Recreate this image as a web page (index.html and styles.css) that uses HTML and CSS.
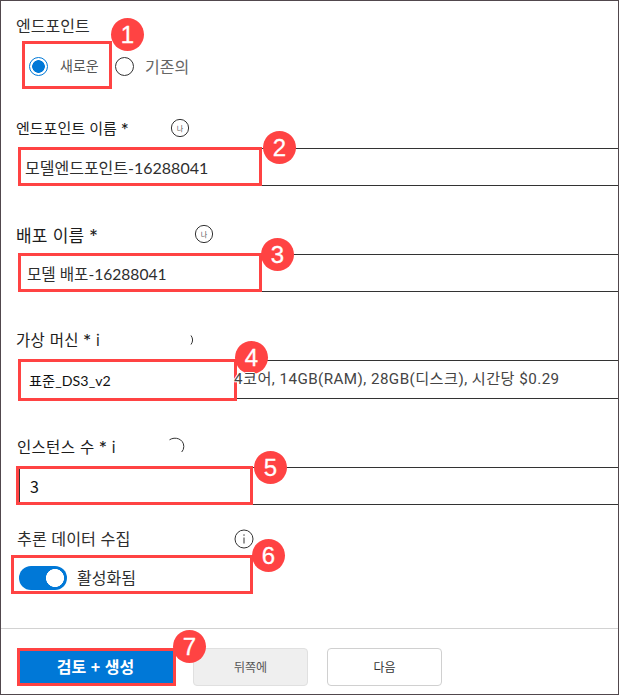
FILE: index.html
```html
<!DOCTYPE html>
<html lang="ko">
<head>
<meta charset="utf-8">
<title>엔드포인트</title>
<link rel="stylesheet" href="styles.css">
</head>
<body>
<main class="panel">
  <section class="group endpoint">
    <h2 class="label t-endpoint">엔드포인트</h2>
    <div class="radios">
      <label class="radio marked"><span class="dot on"></span><span class="t-new">새로운</span><span class="frame f1"></span><b class="badge b1">1</b></label>
      <label class="radio other"><span class="dot"></span><span class="t-old">기존의</span></label>
    </div>
  </section>

  <section class="group">
    <div class="label"><span class="t-name">엔드포인트 이름 *</span>
      <svg class="icon i1" viewBox="0 0 20 20"><circle cx="10" cy="10" r="8.6"/><text x="10" y="12.5">나</text></svg></div>
    <div class="field"><span class="t-v1">모델엔드포인트<span class="digits">-16288041</span></span><span class="frame f2"></span><b class="badge b2">2</b></div>
  </section>

  <section class="group">
    <div class="label"><span class="t-deploy">배포 이름 *</span>
      <svg class="icon i2" viewBox="0 0 20 20"><circle cx="10" cy="10" r="8.6"/><text x="10" y="12.5">나</text></svg></div>
    <div class="field"><span class="t-v2">모델 배포-16288041</span><span class="frame f3"></span><b class="badge b3">3</b></div>
  </section>

  <section class="group">
    <div class="label"><span class="t-vm">가상 머신 * i</span>
      <svg class="icon i3" viewBox="0 0 20 20"><path d="M16 5.5Q19.2 10 16 14.5"/></svg></div>
    <div class="field tall"><span class="t-v3">표준_DS3_v2</span><span class="frame f4"></span><b class="badge b4">4</b><span class="t-spec">4코어, 14GB(RAM), 28GB(디스크), 시간당 $0.29</span></div>
  </section>

  <section class="group">
    <div class="label"><span class="t-count">인스턴스 수 * i</span>
      <svg class="icon i4" viewBox="0 0 20 20"><path d="M3.5 2.8C9-.8 17.8 1.800 17.800 9.500Q17.800 12.800 15.700 15"/></svg></div>
    <div class="field count"><span class="t-v4">3</span><span class="frame f5"></span><b class="badge b5">5</b></div>
  </section>

  <section class="group collect">
    <div class="label"><span class="t-collect">추론 데이터 수집</span>
      <svg class="icon i5" viewBox="0 0 20 20"><circle cx="10" cy="10" r="9"/><path d="M10 8.500v6M10 5.300v1.500"/></svg></div>
    <div class="switch-row"><span class="switch"></span><span class="t-on">활성화됨</span><span class="frame f6"></span><b class="badge b6">6</b></div>
  </section>

  <footer class="actions">
    <button class="btn primary"><span>검토 + 생성</span><b class="badge b7">7</b></button>
    <button class="btn muted">뒤쪽에</button>
    <button class="btn">다음</button>
  </footer>
</main>
</body>
</html>
```
FILE: styles.css
```css
* { box-sizing: border-box; }
body { margin: 0; background: #fff; }
.panel {
  width: 619px;
  height: 695px;
  border: 1px solid #51484d;
  overflow: hidden;
  display: grid;
  grid-template-rows: 110px 106px 106px 107px 92px 106px 66px;
  color: #2e2e2e;
  font: 400 16px/20px Lato, "Noto Sans CJK KR", sans-serif;
  white-space: nowrap;
}
.label { display: flex; align-items: center; height: 20px; margin: 0; padding-left: 15px; font-family: Inter, "Noto Sans CJK KR", sans-serif; font-size: 16px; font-weight: 400; }
.group { display: flex; flex-direction: column; padding-top: 7px; }

.endpoint { padding-top: 15px; }
.radios { display: flex; align-items: center; height: 48px; margin-top: 5px; padding-left: 21px; }
.radio { position: relative; display: flex; align-items: center; width: 90px; height: 48px; padding-left: 7px; gap: 12px; }
.radio.other { width: auto; padding-left: 3px; gap: 11px; margin-top: 2px; }
.radio.marked { padding-top: 2px; }
.dot { width: 19px; height: 19px; border: 1px solid #333; border-radius: 50%; }
.dot.on { border-color: #0078d7; background: radial-gradient(circle, #0078d7 6px, #fff 6.6px); }
.t-new { font-size: 14px; color: #555; }
.t-old { padding-top: 2px; color: #666; }

.field { position: relative; display: flex; align-items: center; height: 38px; margin: 10px 0 0 17px; border: solid #333; border-width: 1px 0; padding-left: 7px; }
.tall { height: 39px; }
.count { margin-left: 18px; border-left: 1px solid #333; padding-left: 6px; }

.frame { position: absolute; border: 3px solid #ff4343; pointer-events: none; }
.f1 { inset: 0; }
.f2, .f3 { left: 0; top: -2px; width: 244px; height: 39px; }
.f4 { left: 0; top: -2px; width: 219px; height: 42px; }
.f5 { left: -4px; top: -2px; width: 237px; height: 39px; }
.count { border-left-width: 1px; }
.f6 { left: 10px; top: 0; width: 242px; height: 39px; }
.badge { position: absolute; width: 33px; height: 33px; border-radius: 50%; background: #ff4343; color: #fff; font: 400 24px/33px "Liberation Sans", sans-serif; text-align: center; -webkit-text-stroke: .3px #fff; }
.b1 { left: 89px; top: -23px; }
.b2 { left: 245px; top: -18px; }
.b3 { left: 243px; top: -17px; }
.b4 { left: 217px; top: -20px; }
.b5 { left: 234px; top: -17px; }
.b6 { left: 251px; top: -16px; }
.b7 { left: 153px; top: -21px; }

.icon { width: 20px; height: 20px; fill: none; stroke: #333; stroke-width: 1; }
.icon text { fill: #555; stroke: none; font-size: 7px; text-anchor: middle; }
.t-name { width: 154px; padding-top: 2px; font-size: 15px; color: #1d1d1d; }
.t-deploy { width: 178px; padding-top: 3px; font-size: 17px; letter-spacing: .2px; color: #1d1d1d; }
.t-vm { width: 159px; padding-top: 2px; font-size: 15.500px; letter-spacing: .25px; color: #1d1d1d; }
.t-count { width: 150px; padding-top: 2px; font-size: 15.500px; letter-spacing: .3px; padding-left: 1px; color: #1d1d1d; }
.t-collect { width: 218px; padding-left: 1px; font-size: 16.200px; }
.t-v1 { font-size: 16px; padding-top: 1px; }
.t-v2 { font-size: 15.600px; padding: 2px 0 0 2px; }
.t-v3 { width: 209px; padding: 2px 0 0 4px; font-size: 14.200px; letter-spacing: .05px; color: #111; }
.t-v4 { padding-left: 4px; font: 16px "Noto Sans CJK KR", sans-serif; color: #111; }
.t-spec { position: relative; top: -1px; color: #444; font: 15.200px/20px Roboto, "Noto Sans CJK KR", sans-serif; letter-spacing: .44px; text-shadow: 1px 0 #fff, -1px 0 #fff, 0 1px #fff, 0 -1px #fff; }

.switch-row { position: relative; display: flex; align-items: center; height: 39px; margin-top: 6px; padding: 6px 0 0 18px; gap: 10px; }
.switch { width: 48px; height: 24px; border-radius: 12px; background: radial-gradient(circle at 36px 12px, #fff 8.700px, #0078d7 9.300px); }

.actions { display: flex; align-items: flex-start; border-top: 1px solid #d2d2d2; padding: 19px 0 0 16px; }
.btn { position: relative; width: 115px; height: 38px; margin: 0 0 0 19px; padding: 0; border: 1px solid #d0d0d0; border-radius: 4px; background: #fff; color: #333; font: 400 12px/34px "Noto Sans CJK KR", sans-serif; }
.btn.muted { margin-left: 17px; background: #efefef; border-color: #e0e0e0; color: #555; }
.btn.primary { z-index: 1; width: 159px; margin: 0; padding: 0 2px 3px 0; border: 3px solid #ff4343; border-radius: 0; background: #0078d7; color: #fff; font-weight: 700; font-size: 16px; line-height: 28px; }
```
